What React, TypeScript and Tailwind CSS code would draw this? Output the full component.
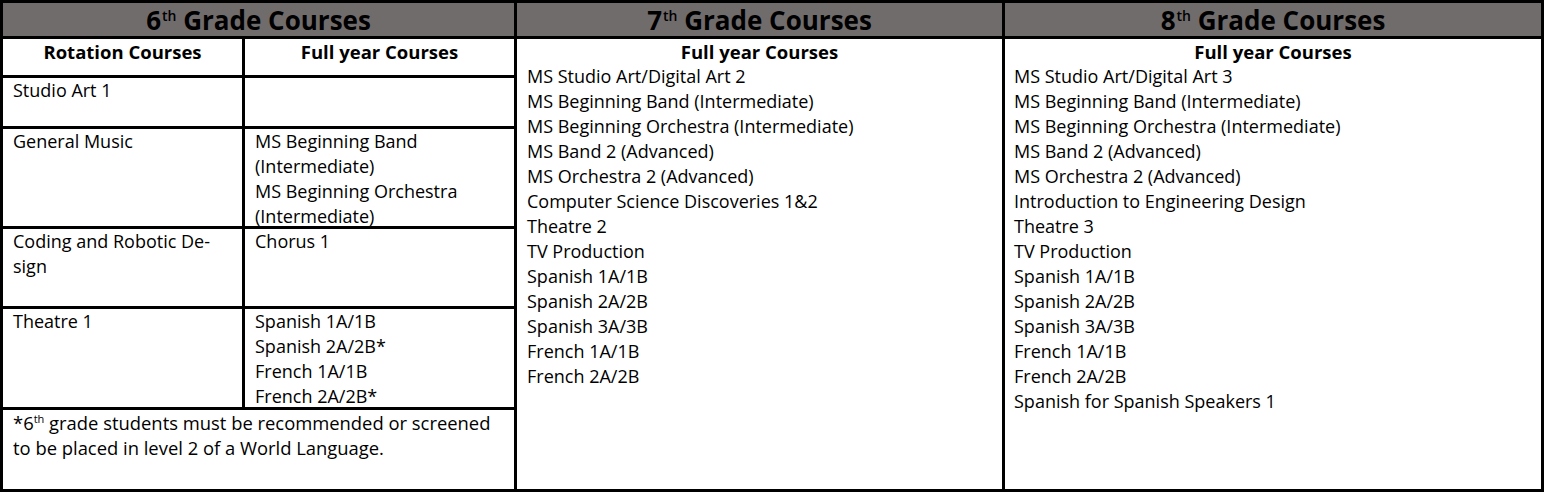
import React from "react";

const grade7 = [
  "MS Studio Art/Digital Art 2",
  "MS Beginning Band (Intermediate)",
  "MS Beginning Orchestra (Intermediate)",
  "MS Band 2 (Advanced)",
  "MS Orchestra 2 (Advanced)",
  "Computer Science Discoveries 1&2",
  "Theatre 2",
  "TV Production",
  "Spanish 1A/1B",
  "Spanish 2A/2B",
  "Spanish 3A/3B",
  "French 1A/1B",
  "French 2A/2B",
];

const grade8 = [
  "MS Studio Art/Digital Art 3",
  "MS Beginning Band (Intermediate)",
  "MS Beginning Orchestra (Intermediate)",
  "MS Band 2 (Advanced)",
  "MS Orchestra 2 (Advanced)",
  "Introduction to Engineering Design",
  "Theatre 3",
  "TV Production",
  "Spanish 1A/1B",
  "Spanish 2A/2B",
  "Spanish 3A/3B",
  "French 1A/1B",
  "French 2A/2B",
  "Spanish for Spanish Speakers 1",
];

const rows6: { h: string; left: string[]; right: string[] }[] = [
  { h: "h-[48px]", left: ["Studio Art 1"], right: [] },
  {
    h: "h-[97px]",
    left: ["General Music"],
    right: ["MS Beginning Band", "(Intermediate)", "MS Beginning Orchestra", "(Intermediate)"],
  },
  { h: "h-[77px]", left: ["Coding and Robotic De-", "sign"], right: ["Chorus 1"] },
  {
    h: "h-[98px]",
    left: ["Theatre 1"],
    right: ["Spanish 1A/1B", "Spanish 2A/2B*", "French 1A/1B", "French 2A/2B*"],
  },
];

function Header({ n }: { n: string }) {
  return (
    <div className="flex h-[36px] items-center justify-center border-b-[3px] border-black bg-[#716c6c] text-[26px] font-bold leading-none text-black">
      <span>
        {n}
        <sup className="relative -top-[9px] ml-px text-[14px] font-semibold">th</sup> Grade Courses
      </span>
    </div>
  );
}

function Lines({ items }: { items: string[] }) {
  return (
    <>
      {items.map((t, i) => (
        <div key={i} className="whitespace-nowrap">
          {t}
        </div>
      ))}
    </>
  );
}

export default function App() {
  return (
    <div
      className="flex h-[492px] w-[1544px] overflow-hidden border-[3px] border-black bg-white text-[18px] leading-[25px] text-black"
      style={{ fontFamily: '"Open Sans", "Noto Sans", sans-serif' }}
    >
      {/* 6th grade */}
      <div className="flex w-[514px] shrink-0 flex-col border-r-[3px] border-black">
        <Header n="6" />
        <div className="flex h-[39px] border-b-[3px] border-black text-[18.5px] font-bold">
          <div className="w-[242px] border-r-[3px] border-black text-center">Rotation Courses</div>
          <div className="flex-1 text-center">Full year Courses</div>
        </div>
        {rows6.map((r, i) => (
          <div key={i} className={`flex ${r.h} box-content border-b-[3px] border-black`}>
            <div className="w-[242px] border-r-[3px] border-black px-[10px]">
              <Lines items={r.left} />
            </div>
            <div className="flex-1 px-[10px]">
              <Lines items={r.right} />
            </div>
          </div>
        ))}
        <div className="flex-1 px-[10px] text-[18.4px]">
          *6<sup className="-top-[7px] text-[11px]">th</sup> grade students must be recommended or screened
          <br />
          to be placed in level 2 of a World Language.
        </div>
      </div>

      {/* 7th grade */}
      <div className="flex w-[488px] shrink-0 flex-col border-r-[3px] border-black">
        <Header n="7" />
        <div className="px-[10px]">
          <div className="text-center text-[18.5px] font-bold">Full year Courses</div>
          <Lines items={grade7} />
        </div>
      </div>

      {/* 8th grade */}
      <div className="flex flex-1 flex-col">
        <Header n="8" />
        <div className="px-[9px]">
          <div className="text-center text-[18.5px] font-bold">Full year Courses</div>
          <Lines items={grade8} />
        </div>
      </div>
    </div>
  );
}
